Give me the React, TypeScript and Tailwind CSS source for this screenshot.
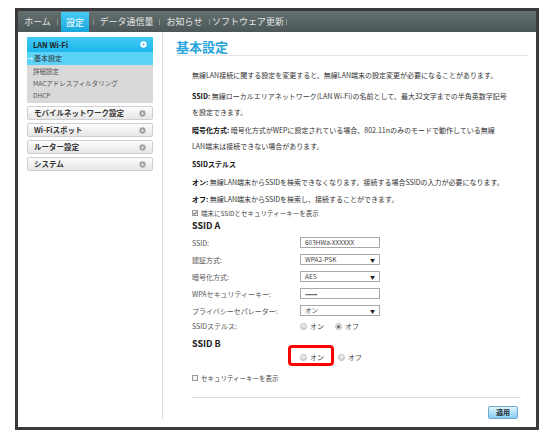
import React from 'react';

const NavSep = () => <span className="w-px h-[6px] bg-[#8a9595]" />;

const SideButton = ({ label }: { label: string }) => (
	<div className="h-[14px] flex items-center justify-between pl-[6px] pr-[6px] border border-[#cfcfcf] rounded-[2px] bg-linear-to-b from-[#fdfdfd] to-[#e6e6e6]">
		<span className="text-[7.5px] font-bold text-[#333] leading-none">{label}</span>
		<svg width="7" height="7" viewBox="0 0 8 8">
			<circle cx="4" cy="4" r="3.6" fill="#a3a3a3" />
			<path d="M3.2 2.4 L5.4 4 L3.2 5.6 Z" fill="#fff" />
		</svg>
	</div>
);

const Radio = ({ checked }: { checked?: boolean }) => (
	<span className="inline-flex w-[7px] h-[7px] rounded-full border border-[#b8b8b8] bg-linear-to-b from-[#f4f4f4] to-[#d6d6d6] items-center justify-center">
		{checked && <span className="w-[3px] h-[3px] rounded-full bg-[#666]" />}
	</span>
);

const Field = ({ children, select }: { children: React.ReactNode; select?: boolean }) => (
	<div className="w-[80px] h-[11px] border border-[#a9a9a9] bg-white flex items-center justify-between pl-[4px] pr-[4px] text-[6.5px] text-[#444] leading-none">
		<span>{children}</span>
		{select && <span className="text-[5px] text-[#222]">▼</span>}
	</div>
);

const FormRow = ({ label, children }: { label: string; children: React.ReactNode }) => (
	<div className="h-[17px] flex items-center">
		<span className="w-[108px] text-[7px] text-[#555]">{label}</span>
		{children}
	</div>
);

const App = () => {
	return (
		<div className="w-[552px] h-[439px] bg-white pt-[8px] pl-[15px] font-['Noto_Sans_CJK_JP','Noto_Sans',sans-serif]">
			<div className="w-[524px] h-[422px] border-[3px] border-[#3a3a3a] flex flex-col overflow-hidden">
				{/* top nav */}
				<div className="h-[21px] shrink-0 flex items-center bg-linear-to-b from-[#646f6f] to-[#4c5757] text-[9px] text-[#e6e6e6] leading-none">
					<div className="w-[39px] text-center">ホーム</div>
					<NavSep />
					<div className="w-[3px]" />
					<div className="w-[28px] h-[20px] mt-[1px] flex items-center justify-center bg-linear-to-b from-[#46cdf5] to-[#14a6dc] text-white">設定</div>
					<div className="w-[4px]" />
					<NavSep />
					<div className="w-[65px] text-center">データ通信量</div>
					<NavSep />
					<div className="w-[49px] text-center">お知らせ</div>
					<NavSep />
					<div className="w-[76px] text-center">ソフトウェア更新</div>
					<NavSep />
				</div>

				<div className="flex flex-1 pb-[9px]">
					{/* sidebar */}
					<div className="w-[145px] shrink-0 border-r border-[#dddddd] pt-[5px] pl-[9px]">
						<div className="w-[126px]">
							<div className="h-[15px] flex items-center justify-between pl-[6px] pr-[6px] bg-linear-to-b from-[#3fcaf5] to-[#1bb7ec]">
								<span className="text-[7.5px] font-bold text-[#222] leading-none">LAN Wi-Fi</span>
								<svg width="7" height="7" viewBox="0 0 8 8">
									<circle cx="4" cy="4" r="3.6" fill="#fff" />
									<path d="M2.4 3.2 L4 5.2 L5.6 3.2 Z" fill="#1a9fd6" />
								</svg>
							</div>
							<div className="h-[13px] flex items-center bg-[#5dd2f7] text-[7px] text-[#333] leading-none">
								<span className="text-[6px] text-white mr-[1px]">→</span>
								基本設定
							</div>
							<div className="bg-[#d9d9d9] pb-[2px] text-[6.5px] text-[#555] leading-none">
								<div className="h-[12px] flex items-center pl-[6px]">詳細設定</div>
								<div className="h-[12px] flex items-center pl-[6px]">MACアドレスフィルタリング</div>
								<div className="h-[12px] flex items-center pl-[6px]">DHCP</div>
							</div>
							<div className="flex flex-col gap-[3px] mt-[3px]">
								<SideButton label="モバイルネットワーク設定" />
								<SideButton label="Wi-Fiスポット" />
								<SideButton label="ルーター設定" />
								<SideButton label="システム" />
							</div>
						</div>
					</div>

					{/* content */}
					<div className="flex-1 flex flex-col">
						<div className="ml-[12px] mr-[7px] mt-[7px] border-b border-[#e6e6e6]">
							<h1 className="text-[13px] leading-[16px] font-bold text-[#29a4db] pl-[1px]">基本設定</h1>
						</div>

						<div className="pl-[29px] pr-[4px] text-[7px] leading-[16px] text-[#333] whitespace-nowrap">
							<p className="mt-[11px]">無線LAN接続に関する設定を変更すると、無線LAN端末の設定変更が必要になることがあります。</p>
							<p className="mt-[5px]">
								<b className="text-[#111]">SSID:</b> 無線ローカルエリアネットワーク(LAN Wi-Fi)の名前として、最大32文字までの半角英数字記号
								<br />
								を設定できます。
							</p>
							<p className="mt-[2px]">
								<b className="text-[#111]">暗号化方式:</b> 暗号化方式がWEPに設定されている場合、802.11nのみのモードで動作している無線
								<br />
								LAN端末は接続できない場合があります。
							</p>
							<p className="mt-[2px] font-bold text-[#111]">SSIDステルス</p>
							<p className="mt-[2px]">
								<b className="text-[#111]">オン:</b> 無線LAN端末からSSIDを検索できなくなります。接続する場合SSIDの入力が必要になります。
							</p>
							<p className="mt-[1px]">
								<b className="text-[#111]">オフ:</b> 無線LAN端末からSSIDを検索し、接続することができます。
							</p>
							<div className="h-[12px] flex items-center gap-[3px] text-[6.5px] text-[#444]">
								<svg width="6" height="6" viewBox="0 0 6 6">
									<rect x="0.5" y="0.5" width="5" height="5" fill="#f4f4f4" stroke="#999" />
									<path d="M1.3 3 L2.5 4.3 L4.8 1.5" fill="none" stroke="#333" strokeWidth="0.9" />
								</svg>
								端末にSSIDとセキュリティーキーを表示
							</div>
							<div className="h-[12px] flex items-center text-[9px] font-bold text-[#222] leading-none">SSID A</div>

							<div className="mt-[3px]">
								<FormRow label="SSID:">
									<Field>603HWa-XXXXXX</Field>
								</FormRow>
								<FormRow label="認証方式:">
									<Field select>WPA2-PSK</Field>
								</FormRow>
								<FormRow label="暗号化方式:">
									<Field select>AES</Field>
								</FormRow>
								<FormRow label="WPAセキュリティーキー:">
									<Field>
										<span className="text-[5px] tracking-[-0.5px]">••••••••••</span>
									</Field>
								</FormRow>
								<FormRow label="プライバシーセパレーター:">
									<Field select>オン</Field>
								</FormRow>
								<div className="h-[14px] flex items-center">
									<span className="w-[108px] text-[7px] text-[#555]">SSIDステルス:</span>
									<span className="flex items-center gap-[3px] text-[7px] text-[#444]">
										<Radio />
										<span className="mr-[8px]">オン</span>
										<Radio checked />
										<span>オフ</span>
									</span>
								</div>
							</div>

							<div className="mt-[4px] h-[12px] flex items-center text-[9px] font-bold text-[#222] leading-none">SSID B</div>
							<div className="relative mt-[2px] h-[12px] flex items-center text-[7px] text-[#444]">
								<span className="w-[108px]" />
								<span className="flex items-center gap-[3px]">
									<Radio />
									<span className="mr-[11px]">オン</span>
									<Radio />
									<span>オフ</span>
								</span>
								<div className="absolute left-[96px] top-[-6px] w-[46px] h-[21px] border-[3px] border-[#ff0000] rounded-[4px]" />
							</div>

							<div className="mt-[9px] h-[12px] flex items-center gap-[3px] text-[6.5px] text-[#444]">
								<span className="w-[6px] h-[6px] border border-[#999] bg-[#f4f4f4]" />
								セキュリティーキーを表示
							</div>
						</div>

						<div className="ml-[29px] mr-[15px] mt-[13px] border-t border-[#dddddd]" />
						<div className="flex justify-end mr-[18px] mt-[8px]">
							<div className="w-[30px] h-[13px] flex items-center justify-center border border-[#6fa9cf] rounded-[2px] bg-linear-to-b from-[#dff3fd] to-[#86cdf1] text-[7px] font-bold text-[#1d2b36] leading-none">
								適用
							</div>
						</div>
					</div>
				</div>
			</div>
		</div>
	);
};

export default App;
